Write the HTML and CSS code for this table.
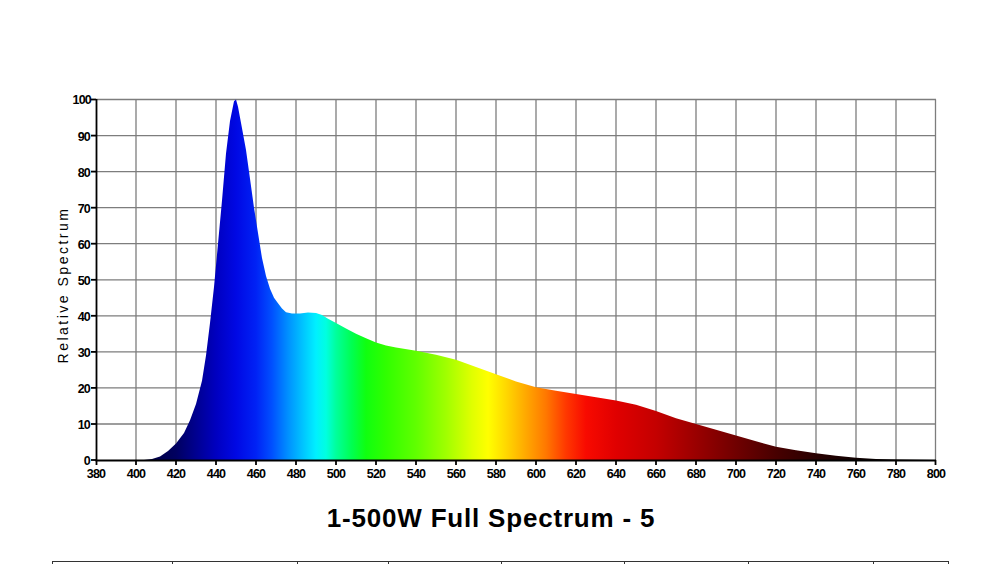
FILE: index.html
```html
<!DOCTYPE html>
<html lang="en">
<head>
<meta charset="utf-8">
<title>1-500W Full Spectrum - 5</title>
<link rel="stylesheet" href="styles.css">
</head>
<body>
<div class="page">
  <svg class="chart" viewBox="0 0 1000 503" width="1000" height="503" xmlns="http://www.w3.org/2000/svg">
    <defs>
      <linearGradient id="spec" gradientUnits="userSpaceOnUse" x1="96" y1="0" x2="936" y2="0">
        <stop offset="0" stop-color="#000030"/>
        <stop offset="0.0595" stop-color="#000040"/>
        <stop offset="0.0952" stop-color="#000060"/>
        <stop offset="0.119" stop-color="#000090"/>
        <stop offset="0.1429" stop-color="#0000c0"/>
        <stop offset="0.1667" stop-color="#0008e4"/>
        <stop offset="0.1905" stop-color="#0022f5"/>
        <stop offset="0.2095" stop-color="#0050ff"/>
        <stop offset="0.2286" stop-color="#0090ff"/>
        <stop offset="0.2476" stop-color="#00c8ff"/>
        <stop offset="0.2619" stop-color="#00f0ff"/>
        <stop offset="0.2738" stop-color="#00ffe0"/>
        <stop offset="0.2857" stop-color="#00ff9c"/>
        <stop offset="0.3048" stop-color="#00ff50"/>
        <stop offset="0.3214" stop-color="#10ff10"/>
        <stop offset="0.3452" stop-color="#30ff00"/>
        <stop offset="0.381" stop-color="#60ff00"/>
        <stop offset="0.4167" stop-color="#a0ff00"/>
        <stop offset="0.4476" stop-color="#e0ff00"/>
        <stop offset="0.4667" stop-color="#ffff00"/>
        <stop offset="0.4881" stop-color="#ffd800"/>
        <stop offset="0.5119" stop-color="#ffa800"/>
        <stop offset="0.5357" stop-color="#ff7800"/>
        <stop offset="0.5595" stop-color="#ff3800"/>
        <stop offset="0.5833" stop-color="#f80a00"/>
        <stop offset="0.619" stop-color="#e00000"/>
        <stop offset="0.6667" stop-color="#c40000"/>
        <stop offset="0.7143" stop-color="#9a0000"/>
        <stop offset="0.7619" stop-color="#700000"/>
        <stop offset="0.8095" stop-color="#480000"/>
        <stop offset="0.8571" stop-color="#280000"/>
        <stop offset="0.9048" stop-color="#100000"/>
        <stop offset="1" stop-color="#000000"/>
      </linearGradient>
    </defs>

    <g class="grid">
      <line x1="136" y1="99.5" x2="136" y2="460"/>
      <line x1="176" y1="99.5" x2="176" y2="460"/>
      <line x1="216" y1="99.5" x2="216" y2="460"/>
      <line x1="256" y1="99.5" x2="256" y2="460"/>
      <line x1="296" y1="99.5" x2="296" y2="460"/>
      <line x1="336" y1="99.5" x2="336" y2="460"/>
      <line x1="376" y1="99.5" x2="376" y2="460"/>
      <line x1="416" y1="99.5" x2="416" y2="460"/>
      <line x1="456" y1="99.5" x2="456" y2="460"/>
      <line x1="496" y1="99.5" x2="496" y2="460"/>
      <line x1="536" y1="99.5" x2="536" y2="460"/>
      <line x1="576" y1="99.5" x2="576" y2="460"/>
      <line x1="616" y1="99.5" x2="616" y2="460"/>
      <line x1="656" y1="99.5" x2="656" y2="460"/>
      <line x1="696" y1="99.5" x2="696" y2="460"/>
      <line x1="736" y1="99.5" x2="736" y2="460"/>
      <line x1="776" y1="99.5" x2="776" y2="460"/>
      <line x1="816" y1="99.5" x2="816" y2="460"/>
      <line x1="856" y1="99.5" x2="856" y2="460"/>
      <line x1="896" y1="99.5" x2="896" y2="460"/>
      <line x1="935.5" y1="99.5" x2="935.5" y2="460"/>
      <line x1="96" y1="424" x2="936" y2="424"/>
      <line x1="96" y1="387.9" x2="936" y2="387.9"/>
      <line x1="96" y1="351.9" x2="936" y2="351.9"/>
      <line x1="96" y1="315.8" x2="936" y2="315.8"/>
      <line x1="96" y1="279.8" x2="936" y2="279.8"/>
      <line x1="96" y1="243.7" x2="936" y2="243.7"/>
      <line x1="96" y1="207.7" x2="936" y2="207.7"/>
      <line x1="96" y1="171.6" x2="936" y2="171.6"/>
      <line x1="96" y1="135.6" x2="936" y2="135.6"/>
      <line x1="96" y1="99.5" x2="936" y2="99.5"/>
    </g>

    <polygon class="area" points="96,460 144,460 152,458.9 160,456.4 168,451 176,443.4 184,433 190,420.3 196,404.1 202,380.7 206,355.5 210,323 214,287 218,243.7 222,200.4 226,153.6 230,121.1 234,101.3 236,99.5 238,106.7 242,128.3 246,149.9 250,178.8 254,207.7 258,232.9 262,258.1 266,276.1 270,288.8 274,297.8 278,303.2 282,308.6 286,312.2 292,313.6 300,313.6 308,312.6 316,312.9 322,315.1 328,318.7 336,323 346,328.4 356,333.8 366,338.2 376,342.5 386,345.4 396,347.5 416,350.8 436,354.7 456,359.8 476,367 496,374.2 516,381.4 536,387.2 556,390.8 576,394 596,397.3 616,400.5 636,404.8 656,411 676,418.2 696,424 716,429.7 736,435.5 756,441.3 776,446.7 796,450.3 816,453.2 836,455.7 856,457.8 876,458.9 896,459.5 936,460"/>

    <g class="axis">
      <line x1="96.5" y1="99" x2="96.5" y2="461"/>
      <line x1="95.5" y1="460.5" x2="936" y2="460.5"/>
      <line x1="91" y1="460" x2="96" y2="460"/>
      <line x1="91" y1="424" x2="96" y2="424"/>
      <line x1="91" y1="387.9" x2="96" y2="387.9"/>
      <line x1="91" y1="351.9" x2="96" y2="351.9"/>
      <line x1="91" y1="315.8" x2="96" y2="315.8"/>
      <line x1="91" y1="279.8" x2="96" y2="279.8"/>
      <line x1="91" y1="243.7" x2="96" y2="243.7"/>
      <line x1="91" y1="207.7" x2="96" y2="207.7"/>
      <line x1="91" y1="171.6" x2="96" y2="171.6"/>
      <line x1="91" y1="135.6" x2="96" y2="135.6"/>
      <line x1="91" y1="99.5" x2="96" y2="99.5"/>
      <line x1="96.5" y1="460" x2="96.5" y2="465"/>
      <line x1="136" y1="460" x2="136" y2="465"/>
      <line x1="176" y1="460" x2="176" y2="465"/>
      <line x1="216" y1="460" x2="216" y2="465"/>
      <line x1="256" y1="460" x2="256" y2="465"/>
      <line x1="296" y1="460" x2="296" y2="465"/>
      <line x1="336" y1="460" x2="336" y2="465"/>
      <line x1="376" y1="460" x2="376" y2="465"/>
      <line x1="416" y1="460" x2="416" y2="465"/>
      <line x1="456" y1="460" x2="456" y2="465"/>
      <line x1="496" y1="460" x2="496" y2="465"/>
      <line x1="536" y1="460" x2="536" y2="465"/>
      <line x1="576" y1="460" x2="576" y2="465"/>
      <line x1="616" y1="460" x2="616" y2="465"/>
      <line x1="656" y1="460" x2="656" y2="465"/>
      <line x1="696" y1="460" x2="696" y2="465"/>
      <line x1="736" y1="460" x2="736" y2="465"/>
      <line x1="776" y1="460" x2="776" y2="465"/>
      <line x1="816" y1="460" x2="816" y2="465"/>
      <line x1="856" y1="460" x2="856" y2="465"/>
      <line x1="896" y1="460" x2="896" y2="465"/>
      <line x1="935.5" y1="460" x2="935.5" y2="465"/>
    </g>

    <g class="ylabels">
      <text x="90" y="464.5">0</text>
      <text x="90" y="428.5">10</text>
      <text x="90" y="392.5">20</text>
      <text x="90" y="356.5">30</text>
      <text x="90" y="320.5">40</text>
      <text x="90" y="284.5">50</text>
      <text x="90" y="248.5">60</text>
      <text x="90" y="212.5">70</text>
      <text x="90" y="176.5">80</text>
      <text x="90" y="140.5">90</text>
      <text x="91" y="104">100</text>
    </g>

    <g class="xlabels">
      <text x="96" y="477.5">380</text>
      <text x="136" y="477.5">400</text>
      <text x="176" y="477.5">420</text>
      <text x="216" y="477.5">440</text>
      <text x="256" y="477.5">460</text>
      <text x="296" y="477.5">480</text>
      <text x="336" y="477.5">500</text>
      <text x="376" y="477.5">520</text>
      <text x="416" y="477.5">540</text>
      <text x="456" y="477.5">560</text>
      <text x="496" y="477.5">580</text>
      <text x="536" y="477.5">600</text>
      <text x="576" y="477.5">620</text>
      <text x="616" y="477.5">640</text>
      <text x="656" y="477.5">660</text>
      <text x="696" y="477.5">680</text>
      <text x="736" y="477.5">700</text>
      <text x="776" y="477.5">720</text>
      <text x="816" y="477.5">740</text>
      <text x="856" y="477.5">760</text>
      <text x="896" y="477.5">780</text>
      <text x="936" y="477.5">800</text>
    </g>

    <text class="ytitle" transform="translate(67.5 285) rotate(-90)">Relative Spectrum</text>
  </svg>

  <div class="caption">1-500W Full Spectrum - 5</div>

  <div class="spec-table">
    <div class="cell"></div>
    <div class="cell"></div>
    <div class="cell"></div>
    <div class="cell"></div>
    <div class="cell"></div>
    <div class="cell"></div>
    <div class="cell"></div>
    <div class="cell"></div>
  </div>
</div>
</body>
</html>
```

FILE: styles.css
```css
html, body {
  margin: 0;
  padding: 0;
  background: #ffffff;
  overflow: hidden;
}

body {
  font-family: "Liberation Sans", Arial, sans-serif;
  color: #000;
}

.page {
  width: 1000px;
  height: 564px;
  overflow: hidden;
  display: flex;
  flex-direction: column;
}

.chart {
  display: block;
  width: 1000px;
  height: 503px;
  flex: none;
}

.grid line {
  stroke: #7d7d7d;
  stroke-width: 1.3;
}

.area {
  fill: url(#spec);
  stroke: none;
}

.axis line {
  stroke: #000;
  stroke-width: 1.8;
}

.ylabels text,
.xlabels text {
  font-family: "Liberation Sans", Arial, sans-serif;
  font-weight: 700;
  font-size: 12.5px;
  letter-spacing: -0.8px;
  fill: #000;
}

.ylabels text {
  text-anchor: end;
}

.xlabels text {
  text-anchor: middle;
}

.ytitle {
  font-family: "Liberation Sans", Arial, sans-serif;
  font-size: 14px;
  letter-spacing: 2.5px;
  fill: #000;
  text-anchor: middle;
}

.caption {
  height: 30px;
  line-height: 30px;
  font-size: 26px;
  font-weight: 700;
  letter-spacing: 0.8px;
  text-align: center;
  padding-right: 18px;
  color: #000;
  flex: none;
}

.spec-table {
  margin-top: 28px;
  margin-left: 52px;
  display: grid;
  grid-template-columns: 120px 125px 91px 113px 123px 124px 125px 75px;
  border-top: 1.5px solid #333;
  border-left: 1.5px solid #333;
  width: max-content;
  flex: none;
}

.spec-table .cell {
  height: 40px;
  border-right: 1.5px solid #333;
}
```
